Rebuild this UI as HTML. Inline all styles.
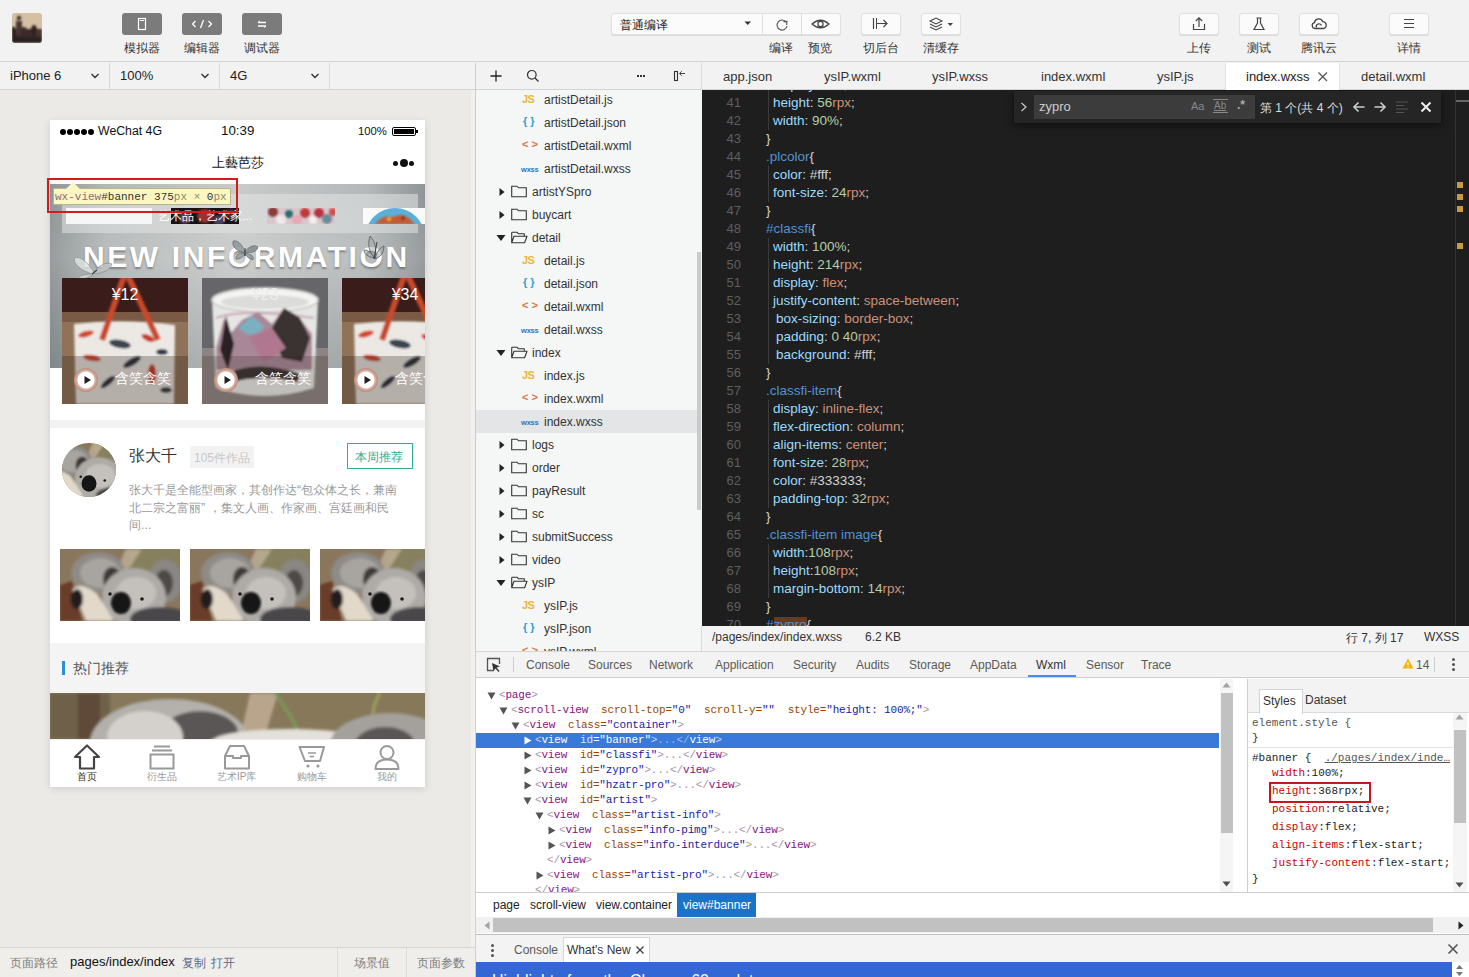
<!DOCTYPE html>
<html><head><meta charset="utf-8">
<style>
*{margin:0;padding:0;box-sizing:border-box}
html,body{width:1469px;height:977px;overflow:hidden;background:#f2f2f2;font-family:"Liberation Sans",sans-serif;color:#333}
.a{position:absolute}
.t{position:absolute;white-space:nowrap}
/* toolbar */
#top{left:0;top:0;width:1469px;height:62px;background:#f2f2f2;border-bottom:1px solid #d3d3d3}
.gbtn{position:absolute;top:13px;width:40px;height:22px;background:#7b7b7b;border-radius:3px}
.wbtn{position:absolute;top:13px;width:40px;height:22px;background:#fbfbfb;border:1px solid #e0e0e0;border-radius:3px;box-shadow:0 1px 1px rgba(0,0,0,.1)}
.lbl{position:absolute;top:40px;font-size:12px;color:#333;width:60px;text-align:center}
/* row2 */
#row2{left:0;top:63px;width:1469px;height:27px;background:#f2f2f2;border-bottom:1px solid #d3d3d3}
/* simulator */
#sim{left:0;top:90px;width:475px;height:857px;background:#ebeae7}
#simbar{left:0;top:947px;width:475px;height:30px;background:#efeeeb;border-top:1px solid #d6d6d6}
#phone{left:50px;top:120px;width:375px;height:667px;background:#fff;overflow:hidden;box-shadow:0 2px 8px rgba(0,0,0,.12)}
/* tree */
#tree{left:476px;top:90px;width:225px;height:561px;background:#f5f6f6;overflow:hidden}
.tr{position:absolute;left:0;width:225px;height:23px;font-size:12px;color:#333;line-height:23px}
/* editor */
#ed{left:702px;top:90px;width:767px;height:536px;background:#1e1e1e;overflow:hidden}
#edst{left:701px;top:626px;width:768px;height:25px;background:#f3f3f3;border-left:1px solid #dadada}
.ln{position:absolute;left:0;width:39px;text-align:right;font-size:13px;color:#5e5e5e}
.cl{position:absolute;left:65px;font-size:13.5px;color:#9cdcfe;white-space:nowrap}
/* devtools */
#dt{left:476px;top:651px;width:993px;height:326px;background:#fff}
.mono{font-family:"Liberation Mono",monospace}
</style></head><body>
<svg width="0" height="0" style="position:absolute"><defs>
<filter id="bl" x="-20%" y="-20%" width="140%" height="140%"><feGaussianBlur stdDeviation="1.6"/></filter>
<filter id="bl2" x="-20%" y="-20%" width="140%" height="140%"><feGaussianBlur stdDeviation="0.9"/></filter>
<g id="kg">
 <rect width="120" height="72" fill="#8a765c"/>
 <rect x="70" y="0" width="50" height="30" fill="#86805e"/>
 <path d="M66 0 L82 0 L60 34 L50 34 Z" fill="#c9b9a2" opacity=".7" filter="url(#bl)"/>
 <path d="M0 36 L12 32 L22 72 L0 72 Z" fill="#6a3e2c" filter="url(#bl2)"/>
 <g filter="url(#bl)">
  <ellipse cx="38" cy="24" rx="27" ry="21" fill="#8e8a86"/>
  <ellipse cx="40" cy="24" rx="20" ry="15" fill="#a8a4a0"/>
  <ellipse cx="52" cy="30" rx="9" ry="12" fill="#3e3a38"/>
  <ellipse cx="105" cy="32" rx="17" ry="22" fill="#8a8682"/>
  <ellipse cx="104" cy="34" rx="9" ry="13" fill="#4e4a48"/>
  <ellipse cx="74" cy="48" rx="32" ry="29" fill="#aeaba7"/>
  <ellipse cx="76" cy="44" rx="20" ry="16" fill="#c4c1bd"/>
  <ellipse cx="100" cy="70" rx="30" ry="12" fill="#4a474a"/>
  <path d="M12 40 Q22 32 38 46 L54 72 L26 72 Z" fill="#e2d9cb"/>
  <ellipse cx="17" cy="50" rx="6" ry="10" fill="#221c1a"/>
 </g>
 <ellipse cx="61" cy="54" rx="10" ry="11" fill="#141212" filter="url(#bl2)"/>
 <circle cx="50" cy="45" r="1.8" fill="#1e1a1a"/>
 <circle cx="82" cy="50" r="1.8" fill="#1e1a1a"/>
</g>
</defs></svg>

<!-- TOP TOOLBAR -->
<div id="top" class="a">
  <div class="a" style="left:12px;top:13px;width:30px;height:30px;border-radius:3px;overflow:hidden">
    <svg width="30" height="30"><rect width="30" height="30" fill="#d6c0a4"/><g filter="url(#bl2)">
    <rect x="0" y="16" width="30" height="14" fill="#3a2a26"/>
    <rect x="4" y="8" width="6" height="14" fill="#4a3430"/><circle cx="7" cy="5" r="2.2" fill="#3a2a24"/>
    <ellipse cx="12" cy="18" rx="3" ry="4" fill="#3a2c28"/><ellipse cx="22" cy="17" rx="3" ry="5" fill="#2e2422"/>
    <ellipse cx="27" cy="20" rx="3" ry="4" fill="#4a3430"/><rect x="0" y="24" width="30" height="6" fill="#2a2020"/>
    <rect x="0" y="14" width="3" height="16" fill="#1e1a1a"/></g></svg>
  </div>
  <div class="gbtn" style="left:122px"><svg class="a" style="left:0;top:0" width="40" height="22"><rect x="16.5" y="5.5" width="7" height="11" fill="none" stroke="#fff" stroke-width="1.2"/><line x1="18" y1="7.5" x2="22" y2="7.5" stroke="#fff" stroke-width="1"/></svg></div>
  <div class="gbtn" style="left:182px"><svg class="a" style="left:0;top:0" width="40" height="22"><path d="M13.5 8 L10.5 11 L13.5 14 M26.5 8 L29.5 11 L26.5 14 M21.5 7 L18.5 15" fill="none" stroke="#fff" stroke-width="1.3"/></svg></div>
  <div class="gbtn" style="left:242px"><svg class="a" style="left:0;top:0" width="40" height="22"><path d="M16 9.5 H24 M16 13 H24" stroke="#fff" stroke-width="1.5"/><path d="M18 8 L16 9.5 M22 14.5 L24 13" stroke="#fff" stroke-width="1"/></svg></div>
  <div class="lbl" style="left:112px">模拟器</div>
  <div class="lbl" style="left:172px">编辑器</div>
  <div class="lbl" style="left:232px">调试器</div>

  <div class="wbtn" style="left:611px;width:230px"></div>
  <div class="a" style="left:762px;top:14px;width:1px;height:20px;background:#dedede"></div>
  <div class="a" style="left:801px;top:14px;width:1px;height:20px;background:#dedede"></div>
  <div class="t" style="left:620px;top:17px;font-size:12px;color:#222">普通编译</div>
  <svg class="a" style="left:744px;top:21px" width="8" height="5"><path d="M0.5 0.5 H7 L3.75 4 Z" fill="#333"/></svg>
  <svg class="a" style="left:772px;top:15px" width="20" height="20"><path d="M14.2 7.2 A5 5 0 1 0 15 11" fill="none" stroke="#555" stroke-width="1.1"/><path d="M11.5 6.6 L15 6.4 L14.6 10" fill="none" stroke="#555" stroke-width="1.1"/></svg>
  <svg class="a" style="left:810px;top:15px" width="21" height="18"><path d="M2 9 Q10.5 1.5 19 9 Q10.5 16.5 2 9 Z" fill="none" stroke="#444" stroke-width="1.2"/><circle cx="10.5" cy="9" r="2.6" fill="none" stroke="#444" stroke-width="1.2"/></svg>
  <div class="lbl" style="left:751px">编译</div>
  <div class="lbl" style="left:790px">预览</div>
  <div class="wbtn" style="left:861px"></div>
  <svg class="a" style="left:870px;top:15px" width="22" height="18"><path d="M3.5 3 V14" stroke="#444" stroke-width="1.2"/><path d="M7 8.5 H17 M13.5 5 L17 8.5 L13.5 12" fill="none" stroke="#444" stroke-width="1.2"/><path d="M6.5 3 V14" stroke="#444" stroke-width="1"/></svg>
  <div class="lbl" style="left:851px">切后台</div>
  <div class="wbtn" style="left:921px"></div>
  <svg class="a" style="left:925px;top:14px" width="32" height="20"><path d="M5 7 L11 4 L17 7 L11 10 Z" fill="none" stroke="#444" stroke-width="1.1"/><path d="M5 10 L11 13 L17 10 M5 13 L11 16 L17 13" fill="none" stroke="#444" stroke-width="1.1"/><path d="M22.5 9 H28 L25.25 12 Z" fill="#444"/></svg>
  <div class="lbl" style="left:911px">清缓存</div>

  <div class="wbtn" style="left:1179px"></div>
  <svg class="a" style="left:1189px;top:14px" width="20" height="20"><path d="M4.5 10 V15.5 H15.5 V10" fill="none" stroke="#444" stroke-width="1.2"/><path d="M10 13 V4 M6.8 7 L10 3.8 L13.2 7" fill="none" stroke="#444" stroke-width="1.2"/></svg>
  <div class="lbl" style="left:1169px">上传</div>
  <div class="wbtn" style="left:1239px"></div>
  <svg class="a" style="left:1249px;top:14px" width="20" height="20"><path d="M7.5 4 H12.5 M8.5 4 V9 L5 15.5 H15 L11.5 9 V4" fill="none" stroke="#444" stroke-width="1.2"/></svg>
  <div class="lbl" style="left:1229px">测试</div>
  <div class="wbtn" style="left:1299px"></div>
  <svg class="a" style="left:1309px;top:14px" width="20" height="20"><path d="M6 14.5 A3 3 0 0 1 5.5 8.6 A4.2 4.2 0 0 1 13.6 7.6 A3.5 3.5 0 0 1 14.5 14.5 Z" fill="none" stroke="#444" stroke-width="1.3"/><path d="M7.5 13.5 A2.6 2.6 0 0 1 12.5 11.5" fill="none" stroke="#444" stroke-width="1.3"/></svg>
  <div class="lbl" style="left:1289px">腾讯云</div>
  <div class="wbtn" style="left:1389px"></div>
  <svg class="a" style="left:1399px;top:14px" width="20" height="20"><path d="M5 5.5 H15 M5 9.5 H15 M5 13.5 H15" stroke="#444" stroke-width="1.2"/></svg>
  <div class="lbl" style="left:1379px">详情</div>
</div>

<!-- ROW 2 -->
<div id="row2" class="a">
  <div class="t" style="left:10px;top:5px;font-size:13px;color:#222">iPhone 6</div>
  <svg class="a" style="left:90px;top:9px" width="10" height="8"><path d="M1.5 2 L5 5.5 L8.5 2" fill="none" stroke="#333" stroke-width="1.4"/></svg>
  <div class="a" style="left:109px;top:0;width:1px;height:26px;background:#d8d8d8"></div>
  <div class="t" style="left:120px;top:5px;font-size:13px;color:#222">100%</div>
  <svg class="a" style="left:200px;top:9px" width="10" height="8"><path d="M1.5 2 L5 5.5 L8.5 2" fill="none" stroke="#333" stroke-width="1.4"/></svg>
  <div class="a" style="left:219px;top:0;width:1px;height:26px;background:#d8d8d8"></div>
  <div class="t" style="left:230px;top:5px;font-size:13px;color:#222">4G</div>
  <svg class="a" style="left:310px;top:9px" width="10" height="8"><path d="M1.5 2 L5 5.5 L8.5 2" fill="none" stroke="#333" stroke-width="1.4"/></svg>
  <div class="a" style="left:329px;top:0;width:1px;height:26px;background:#d8d8d8"></div>
  <div class="a" style="left:475px;top:0;width:1px;height:27px;background:#cfcfcf"></div>
  <svg class="a" style="left:489px;top:6px" width="14" height="14"><path d="M7 1.5 V12.5 M1.5 7 H12.5" stroke="#222" stroke-width="1.3"/></svg>
  <svg class="a" style="left:526px;top:6px" width="14" height="14"><circle cx="5.8" cy="5.8" r="4.3" fill="none" stroke="#333" stroke-width="1.2"/><path d="M9 9 L12.5 12.5" stroke="#333" stroke-width="1.3"/></svg>
  <div class="a" style="left:637px;top:12px;width:2px;height:2px;background:#333;box-shadow:3px 0 #333,6px 0 #333"></div>
  <svg class="a" style="left:671px;top:5px" width="16" height="14"><rect x="3.5" y="3.5" width="3" height="9" fill="none" stroke="#333" stroke-width="1.1"/><path d="M8.5 5.5 H14 M8.5 5.5 L10.8 3.2 M8.5 5.5 L10.8 7.8" fill="none" stroke="#333" stroke-width="0.9"/></svg>
  <div class="a" style="left:701px;top:0;width:1px;height:27px;background:#dadada"></div>
  <div class="a" style="left:1225px;top:0;width:115px;height:27px;background:#fff;border-left:1px solid #e2e2e2;border-right:1px solid #e2e2e2"></div>
  <div class="t" style="left:723px;top:6px;font-size:13px;color:#333">app.json</div><div class="t" style="left:824px;top:6px;font-size:13px;color:#333">ysIP.wxml</div><div class="t" style="left:932px;top:6px;font-size:13px;color:#333">ysIP.wxss</div><div class="t" style="left:1041px;top:6px;font-size:13px;color:#333">index.wxml</div><div class="t" style="left:1157px;top:6px;font-size:13px;color:#333">ysIP.js</div><div class="t" style="left:1361px;top:6px;font-size:13px;color:#333">detail.wxml</div>
  <div class="t" style="left:1246px;top:6px;font-size:13px;color:#222">index.wxss</div>
  <svg class="a" style="left:1317px;top:8px" width="12" height="12"><path d="M1.5 1.5 L10 10 M10 1.5 L1.5 10" stroke="#555" stroke-width="1.2"/></svg>
</div>

<!-- SIMULATOR -->
<div id="sim" class="a"></div>
<div id="phone" class="a">
  <!-- status bar -->
  <div class="a" style="left:10px;top:9px;width:6px;height:6px;border-radius:50%;background:#000;box-shadow:7px 0 #000,14px 0 #000,21px 0 #000,28px 0 #000"></div>
  <div class="t" style="left:48px;top:4px;font-size:12.3px;color:#111">WeChat 4G</div>
  <div class="t" style="left:171px;top:3px;font-size:13.3px;color:#111">10:39</div>
  <div class="t" style="left:308px;top:5px;font-size:11.3px;color:#111">100%</div>
  <div class="a" style="left:342px;top:7px;width:24px;height:9px;border:1px solid #000;border-radius:2px;padding:1px"><div style="width:100%;height:100%;background:#000"></div></div>
  <div class="a" style="left:366px;top:10px;width:2px;height:3px;background:#000"></div>
  <!-- nav -->
  <div class="t" style="left:0;width:375px;text-align:center;top:34px;font-size:13px;color:#111">上藝芭莎</div>
  <div class="a" style="left:343px;top:41px;width:5px;height:5px;border-radius:50%;background:#111"></div>
  <div class="a" style="left:350px;top:39px;width:8px;height:8px;border-radius:50%;background:#111"></div>
  <div class="a" style="left:359px;top:41px;width:5px;height:5px;border-radius:50%;background:#111"></div>
  <!-- banner -->
  <div class="a" style="left:0;top:64px;width:375px;height:184px;background:linear-gradient(90deg,#8f9597 0%,#b4b8b8 15%,#c9cbca 50%,#b4b8b8 85%,#8f9597 100%)">
    <div class="a" style="left:0;top:0;width:375px;height:184px;background:linear-gradient(180deg,rgba(255,255,255,0) 0%,rgba(255,255,255,.08) 40%,rgba(60,70,75,.18) 100%)"></div>
    <div class="a" style="left:12px;top:10px;width:356px;height:39px;background:rgba(225,228,227,.55)"></div>
    <div class="a" style="left:16px;top:24px;width:86px;height:16px;background:#f6f6f6"></div>
    <svg class="a" style="left:121px;top:24px" width="68" height="16"><rect width="68" height="16" fill="#161214"/><g filter="url(#bl2)"><ellipse cx="14" cy="10" rx="6" ry="6" fill="#6a3a44"/><ellipse cx="34" cy="8" rx="8" ry="7" fill="#9a3030"/><ellipse cx="48" cy="12" rx="6" ry="5" fill="#4a4060"/><ellipse cx="60" cy="6" rx="5" ry="5" fill="#5a2a2a"/></g></svg>
    <div class="t" style="left:108px;top:24px;font-size:12px;color:#fff">艺术品，艺术家...</div>
    <svg class="a" style="left:217px;top:24px" width="68" height="16"><rect width="68" height="16" fill="#d8c8cc"/><g filter="url(#bl2)"><circle cx="6" cy="4" r="5" fill="#8a3a3a"/><circle cx="14" cy="12" r="5" fill="#f0e8ec"/><circle cx="22" cy="6" r="4" fill="#2a6a70"/><circle cx="30" cy="12" r="5" fill="#e8a8b8"/><circle cx="38" cy="5" r="5" fill="#c03838"/><circle cx="46" cy="12" r="4" fill="#f4f0f0"/><circle cx="52" cy="5" r="5" fill="#b83040"/><circle cx="60" cy="11" r="5" fill="#6a8a98"/><circle cx="66" cy="4" r="4" fill="#d05050"/></g></svg>
    <svg class="a" style="left:313px;top:24px" width="62" height="16"><rect width="62" height="16" fill="#fafafa"/><circle cx="32" cy="30" r="30" fill="#5ab0dc"/><g filter="url(#bl2)"><path d="M12 16 Q20 6 30 9 Q40 4 48 12 L52 16 Z" fill="#c85a30"/><circle cx="26" cy="11" r="2" fill="#e8b040"/><circle cx="40" cy="10" r="2" fill="#6a3a20"/></g></svg>
    <div class="t" style="left:33px;top:56px;font-size:30px;font-weight:bold;letter-spacing:2.6px;color:#fff;text-shadow:0 2px 2px rgba(60,60,60,.45)">NEW INFORMATION</div>
    <svg class="a" style="left:22px;top:68px" width="42" height="28" viewBox="0 0 42 28"><g stroke="#7a8284" stroke-width=".6"><path d="M22 20 Q10 2 2 6 Q2 16 20 22 Z" fill="rgba(225,228,228,.8)"/><path d="M20 22 Q6 22 6 27 Q14 28 21 23 Z" fill="rgba(205,210,210,.8)"/><path d="M22 20 Q32 8 40 12 Q38 20 23 22 Z" fill="rgba(190,196,196,.8)"/></g><path d="M20 22 L25 18" stroke="#444" stroke-width="1.2"/></svg>
    <svg class="a" style="left:181px;top:55px" width="28" height="22" viewBox="0 0 28 22"><g stroke="#5a6264" stroke-width=".6"><path d="M14 12 Q8 0 2 2 Q0 10 13 14 Z" fill="rgba(140,148,150,.85)"/><path d="M13 14 Q4 14 5 20 Q10 21 14 15 Z" fill="rgba(150,158,160,.85)"/><path d="M14 12 Q22 4 27 8 Q26 14 15 14 Z" fill="rgba(130,138,140,.85)"/><path d="M15 14 Q24 16 22 21 Q17 20 14 15 Z" fill="rgba(140,148,150,.85)"/></g><path d="M14 9 L14 17" stroke="#333" stroke-width="1.1"/></svg>
    <svg class="a" style="left:312px;top:50px" width="24" height="28" viewBox="0 0 24 28"><g stroke="#4a5254" stroke-width=".7" fill="rgba(160,168,170,.5)"><path d="M12 24 Q4 14 8 2 Q16 10 13 24 Z"/><path d="M13 24 Q16 14 22 12 Q22 22 13 25 Z"/><path d="M12 24 Q2 22 2 16 Q8 16 12 23 Z"/></g><path d="M12 25 L15 8" stroke="#333" stroke-width=".9"/></svg>
  </div>
  <!-- cards -->
  <svg class="a" style="left:0;top:0;width:0;height:0"><defs><g id="bag">
  <rect width="126" height="126" fill="#8f7258"/>
  <rect width="126" height="34" fill="#3a1c1a"/>
  <rect x="0" y="34" width="126" height="10" fill="#7a5a44"/>
  <g filter="url(#bl2)">
   <path d="M12 46 Q60 40 113 47 L112 126 L14 126 Z" fill="#ece8e4"/>
   <path d="M62 -2 L40 62" stroke="#c84a2c" stroke-width="6" fill="none"/>
   <path d="M66 -2 L96 62" stroke="#c84a2c" stroke-width="6" fill="none"/>
   <ellipse cx="24" cy="56" rx="8" ry="3" fill="#d44a2a" transform="rotate(-15 24 56)"/>
   <ellipse cx="58" cy="66" rx="11" ry="4" fill="#3a4450" transform="rotate(10 58 66)"/>
   <ellipse cx="86" cy="60" rx="7" ry="3" fill="#c83a28" transform="rotate(25 86 60)"/>
   <ellipse cx="100" cy="74" rx="6" ry="3" fill="#2a3a4a"/>
   <ellipse cx="30" cy="80" rx="9" ry="3" fill="#d24a2a" transform="rotate(10 30 80)"/>
   <ellipse cx="70" cy="84" rx="10" ry="3.5" fill="#2a3440" transform="rotate(-30 70 84)"/>
   <ellipse cx="90" cy="96" rx="4" ry="10" fill="#c93a26"/>
   <ellipse cx="46" cy="104" rx="9" ry="3" fill="#2a3040" transform="rotate(-40 46 104)"/>
   <ellipse cx="22" cy="108" rx="6" ry="3" fill="#c84a2c"/>
   <ellipse cx="104" cy="112" rx="6" ry="3" fill="#3a3a44"/>
  </g>
  <rect x="0" y="78" width="126" height="48" fill="rgba(40,30,20,.28)"/>
</g>
<g id="cup">
  <rect width="126" height="126" fill="#66666a"/>
  <rect x="0" y="70" width="126" height="56" fill="#8c8482"/>
  <g filter="url(#bl2)">
   <path d="M10 22 L116 22 L112 110 Q63 126 14 110 Z" fill="#e6e6e4"/>
   <ellipse cx="63" cy="22" rx="53" ry="12" fill="#f4f4f2" stroke="#cfcfcd" stroke-width="2"/>
   <ellipse cx="63" cy="24" rx="44" ry="7" fill="#dcdcda"/>
   <path d="M14 40 Q40 30 112 40" stroke="#c8a8b8" stroke-width="2" fill="none"/>
   <path d="M14 70 L22 40 L28 56 L40 42 L56 34 L70 46 L82 30 L96 38 L110 56 L110 92 L14 92 Z" fill="#a88898"/>
   <path d="M18 72 L24 38 L32 66 L26 92 Z" fill="#2a2222"/>
   <path d="M70 50 L82 30 L98 40 L108 60 L100 84 L80 80 Z" fill="#3a3030"/>
   <path d="M36 50 L50 38 L62 48 L54 62 Z" fill="#7ab0c0"/>
   <path d="M46 58 L70 50 L84 70 L62 84 Z" fill="#b07890"/>
   <path d="M28 94 Q60 82 98 96 L96 104 Q60 96 30 104 Z" fill="#3a3234"/>
  </g>
  <rect x="0" y="78" width="126" height="48" fill="rgba(40,30,20,.2)"/>
</g></defs></svg>
  <svg class="a" style="left:12px;top:158px" width="126" height="126"><use href="#bag"/></svg>
  <svg class="a" style="left:152px;top:158px" width="126" height="126"><use href="#cup"/></svg>
  <svg class="a" style="left:292px;top:158px" width="83" height="126" viewBox="0 0 83 126"><use href="#bag"/></svg>
  <div class="t" style="left:12px;width:126px;text-align:center;top:166px;font-size:16px;color:#fff">¥12</div>
  <div class="t" style="left:152px;width:126px;text-align:center;top:166px;font-size:16px;color:#eee">¥23</div>
  <div class="t" style="left:292px;width:126px;text-align:center;top:166px;font-size:16px;color:#fff">¥34</div>
  <div class="a" style="left:24px;top:248px;width:24px;height:24px;border-radius:50%;background:radial-gradient(circle,#fff 0,#fff 8px,#d9b2a4 9px,#b98a7a 12px)"></div>
<svg class="a" style="left:32px;top:255px" width="10" height="10"><path d="M2.5 1 L9 5 L2.5 9 Z" fill="#222"/></svg>
<div class="t" style="left:65px;top:250px;font-size:14px;color:#fff">含笑含笑</div><div class="a" style="left:164px;top:248px;width:24px;height:24px;border-radius:50%;background:radial-gradient(circle,#fff 0,#fff 8px,#d9b2a4 9px,#b98a7a 12px)"></div>
<svg class="a" style="left:172px;top:255px" width="10" height="10"><path d="M2.5 1 L9 5 L2.5 9 Z" fill="#222"/></svg>
<div class="t" style="left:205px;top:250px;font-size:14px;color:#fff">含笑含笑</div><div class="a" style="left:304px;top:248px;width:24px;height:24px;border-radius:50%;background:radial-gradient(circle,#fff 0,#fff 8px,#d9b2a4 9px,#b98a7a 12px)"></div>
<svg class="a" style="left:312px;top:255px" width="10" height="10"><path d="M2.5 1 L9 5 L2.5 9 Z" fill="#222"/></svg>
<div class="t" style="left:345px;top:250px;font-size:14px;color:#fff">含笑含笑</div>
  <!-- band -->
  <div class="a" style="left:0;top:300px;width:375px;height:8px;background:#f2f2f2"></div>
  <!-- artist -->
  <div class="a" style="left:12px;top:323px;width:54px;height:54px;border-radius:50%;overflow:hidden"><svg class="a" style="left:0;top:0" width="54" height="54" viewBox="25 0 72 72" preserveAspectRatio="xMidYMid slice"><use href="#kg"/></svg></div>
  <div class="t" style="left:79px;top:326px;font-size:16px;color:#333">张大千</div>
  <div class="a" style="left:140px;top:326px;width:64px;height:22px;background:#f2f2f2"></div>
  <div class="t" style="left:144px;top:330px;font-size:12px;color:#c8c8c8">105件作品</div>
  <div class="a" style="left:297px;top:323px;width:66px;height:26px;border:1px solid #2fae9a"></div>
  <div class="t" style="left:305px;top:329px;font-size:12px;color:#2fae9a">本周推荐</div>
  <div class="t" style="left:79px;top:362px;font-size:12.4px;line-height:17.5px;color:#999">张大千是全能型画家，其创作达“包众体之长，兼南<br>北二宗之富丽” ，集文人画、作家画、宫廷画和民<br>间...</div>
  <svg class="a" style="left:10px;top:429px" width="120" height="72" viewBox="0 0 120 72"><use href="#kg"/></svg>
  <svg class="a" style="left:140px;top:429px" width="120" height="72" viewBox="0 0 120 72"><use href="#kg"/></svg>
  <svg class="a" style="left:270px;top:429px" width="120" height="72" viewBox="0 0 120 72"><use href="#kg"/></svg>
  <!-- hot -->
  <div class="a" style="left:0;top:523px;width:375px;height:50px;background:#f4f4f4"></div>
  <div class="a" style="left:12px;top:541px;width:3px;height:14px;background:#2d8fd8"></div>
  <div class="t" style="left:23px;top:540px;font-size:14px;color:#555">热门推荐</div>
  <svg class="a" style="left:0;top:573px" width="375" height="46" viewBox="0 0 375 46">
    <rect width="375" height="46" fill="#867859"/>
    <g filter="url(#bl)">
      <rect x="0" y="0" width="60" height="46" fill="#6e604a"/>
      <rect x="28" y="0" width="22" height="46" fill="#5e4838"/>
      <path d="M200 0 L228 0 L214 46 L190 46 Z" fill="#c4b098" opacity=".8"/>
      <path d="M225 0 Q240 20 252 46" stroke="#7a9a58" stroke-width="3" fill="none"/>
      <path d="M330 0 Q318 20 326 40" stroke="#a0a060" stroke-width="3" fill="none"/>
      <ellipse cx="120" cy="50" rx="80" ry="44" fill="#b4b0ac"/>
      <ellipse cx="150" cy="40" rx="38" ry="22" fill="#5a5654"/>
      <ellipse cx="95" cy="44" rx="38" ry="26" fill="#d4d0cc"/>
      <ellipse cx="240" cy="50" rx="80" ry="14" fill="#e4e0da"/>
      <ellipse cx="340" cy="52" rx="60" ry="32" fill="#a4a09c"/>
      <ellipse cx="335" cy="52" rx="30" ry="18" fill="#5a5654"/>
    </g>
  </svg>
  <!-- tabbar -->
  <div class="a" style="left:0;top:619px;width:375px;height:48px;background:#fff;border-top:1px solid #eee"></div>
  <svg class="a" style="left:22px;top:623px" width="30" height="30"><path d="M15 2.5 L3 14 H8 V25.5 H22 V14 H27 Z" fill="none" stroke="#444" stroke-width="2.2" stroke-linejoin="round"/></svg>
  <svg class="a" style="left:97px;top:623px" width="30" height="30"><path d="M7 3.5 H23 M5 7.5 H25" stroke="#999" stroke-width="2"/><rect x="3.5" y="11.5" width="23" height="14" fill="none" stroke="#999" stroke-width="2"/></svg>
  <svg class="a" style="left:172px;top:623px" width="30" height="30"><path d="M8 3 H22 L27 13 V25.5 H3 V13 Z M3 13 H11 V15 H19 V13 H27" fill="none" stroke="#999" stroke-width="2" stroke-linejoin="round"/></svg>
  <svg class="a" style="left:247px;top:623px" width="30" height="30"><path d="M2.5 4 H27 L23 18 H8 Z" fill="none" stroke="#999" stroke-width="2" stroke-linejoin="round"/><path d="M11 10 H19 M12.5 13.5 H17" stroke="#999" stroke-width="1.6"/><circle cx="11" cy="23" r="1.6" fill="#999"/><circle cx="21" cy="23" r="1.6" fill="#999"/></svg>
  <svg class="a" style="left:322px;top:623px" width="30" height="30"><circle cx="15" cy="9.5" r="6.5" fill="none" stroke="#999" stroke-width="2"/><path d="M3.5 26 Q3.5 16.5 15 16.5 Q26.5 16.5 26.5 26 Z" fill="none" stroke="#999" stroke-width="2" stroke-linejoin="round"/></svg>
  <div class="t" style="left:27px;top:650px;font-size:10px;color:#333">首页</div>
  <div class="t" style="left:97px;top:650px;font-size:10px;color:#999">衍生品</div>
  <div class="t" style="left:167px;top:650px;font-size:10px;color:#999">艺术IP库</div>
  <div class="t" style="left:247px;top:650px;font-size:10px;color:#999">购物车</div>
  <div class="t" style="left:327px;top:650px;font-size:10px;color:#999">我的</div>
</div>
<!-- tooltip -->
<div class="a" style="left:47px;top:178px;width:191px;height:35px;border:2px solid #d41a1a"></div>
<div class="a" style="left:53px;top:188px;width:178px;height:17px;background:#fcf6c0;border:1px solid #b8b48a"></div>
<svg class="a" style="left:66px;top:182px" width="14" height="7"><path d="M0 7 L7 0 L14 7 Z" fill="#fcf6c0"/></svg>
<div class="t mono" style="left:55px;top:191px;font-size:11px;color:#333"><span style="color:#8e6a7e">wx-view</span>#banner 375<span style="color:#8a8a6a">px</span> <span style="color:#8a8a6a">×</span> 0<span style="color:#8a8a6a">px</span></div>
<div id="simbar" class="a">
  <div class="t" style="left:10px;top:7px;font-size:12px;color:#808080">页面路径</div>
  <div class="t" style="left:70px;top:6px;font-size:13px;color:#111">pages/index/index</div>
  <div class="t" style="left:182px;top:7px;font-size:12px;color:#5a6a90">复制</div>
  <div class="t" style="left:211px;top:7px;font-size:12px;color:#5a6a90">打开</div>
  <div class="a" style="left:337px;top:0;width:1px;height:30px;background:#dcdbd8"></div>
  <div class="t" style="left:354px;top:7px;font-size:12px;color:#808080">场景值</div>
  <div class="a" style="left:406px;top:0;width:1px;height:30px;background:#dcdbd8"></div>
  <div class="t" style="left:417px;top:7px;font-size:12px;color:#808080">页面参数</div>
</div>

<div class="a" style="left:471px;top:90px;width:4px;height:857px;background:#f1f0ed"></div>
<div class="a" style="left:475px;top:63px;width:1px;height:914px;background:#cbcbcb"></div>
<!-- FILE TREE -->
<div id="tree" class="a">
<div class="t" style="left:46px;top:3px;font-size:11px;color:#e9b441;font-weight:bold;letter-spacing:-0.5px">JS</div>
<div class="t" style="left:68px;top:3px;font-size:12px;color:#333">artistDetail.js</div>
<div class="t" style="left:47px;top:25px;font-size:11px;color:#31a0cc;font-weight:bold">{ }</div>
<div class="t" style="left:68px;top:26px;font-size:12px;color:#333">artistDetail.json</div>
<div class="t" style="left:46px;top:48px;font-size:11px;color:#e07248;font-weight:bold">&lt; &gt;</div>
<div class="t" style="left:68px;top:49px;font-size:12px;color:#333">artistDetail.wxml</div>
<div class="t" style="left:45px;top:75px;font-size:7.5px;color:#2f74c6;font-weight:bold;letter-spacing:-0.2px">wxss</div>
<div class="t" style="left:68px;top:72px;font-size:12px;color:#333">artistDetail.wxss</div>
<svg class="a" style="left:22px;top:97px" width="8" height="10"><path d="M1.5 1 L6.5 5 L1.5 9 Z" fill="#222"/></svg>
<svg class="a" style="left:35px;top:94px" width="16" height="14"><path d="M0.7 2.2 H6 L7.5 3.8 H15.3 V12.8 H0.7 Z" fill="none" stroke="#333" stroke-width="1.1"/></svg>
<div class="t" style="left:56px;top:95px;font-size:12px;color:#333">artistYSpro</div>
<svg class="a" style="left:22px;top:120px" width="8" height="10"><path d="M1.5 1 L6.5 5 L1.5 9 Z" fill="#222"/></svg>
<svg class="a" style="left:35px;top:117px" width="16" height="14"><path d="M0.7 2.2 H6 L7.5 3.8 H15.3 V12.8 H0.7 Z" fill="none" stroke="#333" stroke-width="1.1"/></svg>
<div class="t" style="left:56px;top:118px;font-size:12px;color:#333">buycart</div>
<svg class="a" style="left:20px;top:144px" width="10" height="8"><path d="M0.5 1 L9.5 1 L5 7 Z" fill="#222"/></svg>
<svg class="a" style="left:35px;top:140px" width="17" height="14"><path d="M0.7 2.2 H6 L7.5 3.8 H13.3 V6 M0.7 2.2 V12.8 L3 6.2 H16 L13.6 12.8 H0.7" fill="none" stroke="#333" stroke-width="1.1" stroke-linejoin="round"/></svg>
<div class="t" style="left:56px;top:141px;font-size:12px;color:#333">detail</div>
<div class="t" style="left:46px;top:164px;font-size:11px;color:#e9b441;font-weight:bold;letter-spacing:-0.5px">JS</div>
<div class="t" style="left:68px;top:164px;font-size:12px;color:#333">detail.js</div>
<div class="t" style="left:47px;top:186px;font-size:11px;color:#31a0cc;font-weight:bold">{ }</div>
<div class="t" style="left:68px;top:187px;font-size:12px;color:#333">detail.json</div>
<div class="t" style="left:46px;top:209px;font-size:11px;color:#e07248;font-weight:bold">&lt; &gt;</div>
<div class="t" style="left:68px;top:210px;font-size:12px;color:#333">detail.wxml</div>
<div class="t" style="left:45px;top:236px;font-size:7.5px;color:#2f74c6;font-weight:bold;letter-spacing:-0.2px">wxss</div>
<div class="t" style="left:68px;top:233px;font-size:12px;color:#333">detail.wxss</div>
<svg class="a" style="left:20px;top:259px" width="10" height="8"><path d="M0.5 1 L9.5 1 L5 7 Z" fill="#222"/></svg>
<svg class="a" style="left:35px;top:255px" width="17" height="14"><path d="M0.7 2.2 H6 L7.5 3.8 H13.3 V6 M0.7 2.2 V12.8 L3 6.2 H16 L13.6 12.8 H0.7" fill="none" stroke="#333" stroke-width="1.1" stroke-linejoin="round"/></svg>
<div class="t" style="left:56px;top:256px;font-size:12px;color:#333">index</div>
<div class="t" style="left:46px;top:279px;font-size:11px;color:#e9b441;font-weight:bold;letter-spacing:-0.5px">JS</div>
<div class="t" style="left:68px;top:279px;font-size:12px;color:#333">index.js</div>
<div class="t" style="left:46px;top:301px;font-size:11px;color:#e07248;font-weight:bold">&lt; &gt;</div>
<div class="t" style="left:68px;top:302px;font-size:12px;color:#333">index.wxml</div>
<div class="a" style="left:0;top:320px;width:221px;height:23px;background:#e4e5e6"></div>
<div class="t" style="left:45px;top:328px;font-size:7.5px;color:#2f74c6;font-weight:bold;letter-spacing:-0.2px">wxss</div>
<div class="t" style="left:68px;top:325px;font-size:12px;color:#333">index.wxss</div>
<svg class="a" style="left:22px;top:350px" width="8" height="10"><path d="M1.5 1 L6.5 5 L1.5 9 Z" fill="#222"/></svg>
<svg class="a" style="left:35px;top:347px" width="16" height="14"><path d="M0.7 2.2 H6 L7.5 3.8 H15.3 V12.8 H0.7 Z" fill="none" stroke="#333" stroke-width="1.1"/></svg>
<div class="t" style="left:56px;top:348px;font-size:12px;color:#333">logs</div>
<svg class="a" style="left:22px;top:373px" width="8" height="10"><path d="M1.5 1 L6.5 5 L1.5 9 Z" fill="#222"/></svg>
<svg class="a" style="left:35px;top:370px" width="16" height="14"><path d="M0.7 2.2 H6 L7.5 3.8 H15.3 V12.8 H0.7 Z" fill="none" stroke="#333" stroke-width="1.1"/></svg>
<div class="t" style="left:56px;top:371px;font-size:12px;color:#333">order</div>
<svg class="a" style="left:22px;top:396px" width="8" height="10"><path d="M1.5 1 L6.5 5 L1.5 9 Z" fill="#222"/></svg>
<svg class="a" style="left:35px;top:393px" width="16" height="14"><path d="M0.7 2.2 H6 L7.5 3.8 H15.3 V12.8 H0.7 Z" fill="none" stroke="#333" stroke-width="1.1"/></svg>
<div class="t" style="left:56px;top:394px;font-size:12px;color:#333">payResult</div>
<svg class="a" style="left:22px;top:419px" width="8" height="10"><path d="M1.5 1 L6.5 5 L1.5 9 Z" fill="#222"/></svg>
<svg class="a" style="left:35px;top:416px" width="16" height="14"><path d="M0.7 2.2 H6 L7.5 3.8 H15.3 V12.8 H0.7 Z" fill="none" stroke="#333" stroke-width="1.1"/></svg>
<div class="t" style="left:56px;top:417px;font-size:12px;color:#333">sc</div>
<svg class="a" style="left:22px;top:442px" width="8" height="10"><path d="M1.5 1 L6.5 5 L1.5 9 Z" fill="#222"/></svg>
<svg class="a" style="left:35px;top:439px" width="16" height="14"><path d="M0.7 2.2 H6 L7.5 3.8 H15.3 V12.8 H0.7 Z" fill="none" stroke="#333" stroke-width="1.1"/></svg>
<div class="t" style="left:56px;top:440px;font-size:12px;color:#333">submitSuccess</div>
<svg class="a" style="left:22px;top:465px" width="8" height="10"><path d="M1.5 1 L6.5 5 L1.5 9 Z" fill="#222"/></svg>
<svg class="a" style="left:35px;top:462px" width="16" height="14"><path d="M0.7 2.2 H6 L7.5 3.8 H15.3 V12.8 H0.7 Z" fill="none" stroke="#333" stroke-width="1.1"/></svg>
<div class="t" style="left:56px;top:463px;font-size:12px;color:#333">video</div>
<svg class="a" style="left:20px;top:489px" width="10" height="8"><path d="M0.5 1 L9.5 1 L5 7 Z" fill="#222"/></svg>
<svg class="a" style="left:35px;top:485px" width="17" height="14"><path d="M0.7 2.2 H6 L7.5 3.8 H13.3 V6 M0.7 2.2 V12.8 L3 6.2 H16 L13.6 12.8 H0.7" fill="none" stroke="#333" stroke-width="1.1" stroke-linejoin="round"/></svg>
<div class="t" style="left:56px;top:486px;font-size:12px;color:#333">ysIP</div>
<div class="t" style="left:46px;top:509px;font-size:11px;color:#e9b441;font-weight:bold;letter-spacing:-0.5px">JS</div>
<div class="t" style="left:68px;top:509px;font-size:12px;color:#333">ysIP.js</div>
<div class="t" style="left:47px;top:531px;font-size:11px;color:#31a0cc;font-weight:bold">{ }</div>
<div class="t" style="left:68px;top:532px;font-size:12px;color:#333">ysIP.json</div>
<div class="t" style="left:46px;top:554px;font-size:11px;color:#e07248;font-weight:bold">&lt; &gt;</div>
<div class="t" style="left:68px;top:555px;font-size:12px;color:#333">ysIP.wxml</div>
<div class="a" style="left:221px;top:162px;width:4px;height:258px;background:#cacaca"></div>
</div>

<!-- EDITOR -->
<div id="ed" class="a">
<div class="a" style="left:66px;top:0;width:1px;height:40px;background:#3c3c3c"></div><div class="a" style="left:66px;top:76px;width:1px;height:36px;background:#3c3c3c"></div><div class="a" style="left:66px;top:148px;width:1px;height:126px;background:#3c3c3c"></div><div class="a" style="left:66px;top:310px;width:1px;height:108px;background:#3c3c3c"></div><div class="a" style="left:66px;top:454px;width:1px;height:54px;background:#3c3c3c"></div><div class="ln" style="top:-14px;height:18px;line-height:18px">40</div>
<div class="cl" style="left:71px;top:-14px;height:18px;line-height:18px"><span style="color:#9cdcfe">display</span><span style="color:#d4d4d4">: </span><span style="color:#ce9178">flex</span><span style="color:#d4d4d4">;</span></div>
<div class="ln" style="top:4px;height:18px;line-height:18px">41</div>
<div class="cl" style="left:71px;top:4px;height:18px;line-height:18px"><span style="color:#9cdcfe">height</span><span style="color:#d4d4d4">: </span><span style="color:#b5cea8">56</span><span style="color:#ce9178">rpx</span><span style="color:#d4d4d4">;</span></div>
<div class="ln" style="top:22px;height:18px;line-height:18px">42</div>
<div class="cl" style="left:71px;top:22px;height:18px;line-height:18px"><span style="color:#9cdcfe">width</span><span style="color:#d4d4d4">: </span><span style="color:#b5cea8">90%</span><span style="color:#d4d4d4">;</span></div>
<div class="ln" style="top:40px;height:18px;line-height:18px">43</div>
<div class="cl" style="left:64px;top:40px;height:18px;line-height:18px"><span style="color:#d4d4d4">}</span></div>
<div class="ln" style="top:58px;height:18px;line-height:18px">44</div>
<div class="cl" style="left:64px;top:58px;height:18px;line-height:18px"><span style="color:#4f94d4">.plcolor</span><span style="color:#d4d4d4">{</span></div>
<div class="ln" style="top:76px;height:18px;line-height:18px">45</div>
<div class="cl" style="left:71px;top:76px;height:18px;line-height:18px"><span style="color:#9cdcfe">color</span><span style="color:#d4d4d4">: </span><span style="color:#d4d4d4">#fff</span><span style="color:#d4d4d4">;</span></div>
<div class="ln" style="top:94px;height:18px;line-height:18px">46</div>
<div class="cl" style="left:71px;top:94px;height:18px;line-height:18px"><span style="color:#9cdcfe">font-size</span><span style="color:#d4d4d4">: </span><span style="color:#b5cea8">24</span><span style="color:#ce9178">rpx</span><span style="color:#d4d4d4">;</span></div>
<div class="ln" style="top:112px;height:18px;line-height:18px">47</div>
<div class="cl" style="left:64px;top:112px;height:18px;line-height:18px"><span style="color:#d4d4d4">}</span></div>
<div class="ln" style="top:130px;height:18px;line-height:18px">48</div>
<div class="cl" style="left:64px;top:130px;height:18px;line-height:18px"><span style="color:#4f94d4">#classfi</span><span style="color:#d4d4d4">{</span></div>
<div class="ln" style="top:148px;height:18px;line-height:18px">49</div>
<div class="cl" style="left:71px;top:148px;height:18px;line-height:18px"><span style="color:#9cdcfe">width</span><span style="color:#d4d4d4">: </span><span style="color:#b5cea8">100%</span><span style="color:#d4d4d4">;</span></div>
<div class="ln" style="top:166px;height:18px;line-height:18px">50</div>
<div class="cl" style="left:71px;top:166px;height:18px;line-height:18px"><span style="color:#9cdcfe">height</span><span style="color:#d4d4d4">: </span><span style="color:#b5cea8">214</span><span style="color:#ce9178">rpx</span><span style="color:#d4d4d4">;</span></div>
<div class="ln" style="top:184px;height:18px;line-height:18px">51</div>
<div class="cl" style="left:71px;top:184px;height:18px;line-height:18px"><span style="color:#9cdcfe">display</span><span style="color:#d4d4d4">: </span><span style="color:#ce9178">flex</span><span style="color:#d4d4d4">;</span></div>
<div class="ln" style="top:202px;height:18px;line-height:18px">52</div>
<div class="cl" style="left:71px;top:202px;height:18px;line-height:18px"><span style="color:#9cdcfe">justify-content</span><span style="color:#d4d4d4">: </span><span style="color:#ce9178">space-between</span><span style="color:#d4d4d4">;</span></div>
<div class="ln" style="top:220px;height:18px;line-height:18px">53</div>
<div class="cl" style="left:74px;top:220px;height:18px;line-height:18px"><span style="color:#9cdcfe">box-sizing</span><span style="color:#d4d4d4">: </span><span style="color:#ce9178">border-box</span><span style="color:#d4d4d4">;</span></div>
<div class="ln" style="top:238px;height:18px;line-height:18px">54</div>
<div class="cl" style="left:74px;top:238px;height:18px;line-height:18px"><span style="color:#9cdcfe">padding</span><span style="color:#d4d4d4">: </span><span style="color:#b5cea8">0 40</span><span style="color:#ce9178">rpx</span><span style="color:#d4d4d4">;</span></div>
<div class="ln" style="top:256px;height:18px;line-height:18px">55</div>
<div class="cl" style="left:74px;top:256px;height:18px;line-height:18px"><span style="color:#9cdcfe">background</span><span style="color:#d4d4d4">: </span><span style="color:#d4d4d4">#fff</span><span style="color:#d4d4d4">;</span></div>
<div class="ln" style="top:274px;height:18px;line-height:18px">56</div>
<div class="cl" style="left:64px;top:274px;height:18px;line-height:18px"><span style="color:#d4d4d4">}</span></div>
<div class="ln" style="top:292px;height:18px;line-height:18px">57</div>
<div class="cl" style="left:64px;top:292px;height:18px;line-height:18px"><span style="color:#4f94d4">.classfi-item</span><span style="color:#d4d4d4">{</span></div>
<div class="ln" style="top:310px;height:18px;line-height:18px">58</div>
<div class="cl" style="left:71px;top:310px;height:18px;line-height:18px"><span style="color:#9cdcfe">display</span><span style="color:#d4d4d4">: </span><span style="color:#ce9178">inline-flex</span><span style="color:#d4d4d4">;</span></div>
<div class="ln" style="top:328px;height:18px;line-height:18px">59</div>
<div class="cl" style="left:71px;top:328px;height:18px;line-height:18px"><span style="color:#9cdcfe">flex-direction</span><span style="color:#d4d4d4">: </span><span style="color:#ce9178">column</span><span style="color:#d4d4d4">;</span></div>
<div class="ln" style="top:346px;height:18px;line-height:18px">60</div>
<div class="cl" style="left:71px;top:346px;height:18px;line-height:18px"><span style="color:#9cdcfe">align-items</span><span style="color:#d4d4d4">: </span><span style="color:#ce9178">center</span><span style="color:#d4d4d4">;</span></div>
<div class="ln" style="top:364px;height:18px;line-height:18px">61</div>
<div class="cl" style="left:71px;top:364px;height:18px;line-height:18px"><span style="color:#9cdcfe">font-size</span><span style="color:#d4d4d4">: </span><span style="color:#b5cea8">28</span><span style="color:#ce9178">rpx</span><span style="color:#d4d4d4">;</span></div>
<div class="ln" style="top:382px;height:18px;line-height:18px">62</div>
<div class="cl" style="left:71px;top:382px;height:18px;line-height:18px"><span style="color:#9cdcfe">color</span><span style="color:#d4d4d4">: </span><span style="color:#d4d4d4">#333333</span><span style="color:#d4d4d4">;</span></div>
<div class="ln" style="top:400px;height:18px;line-height:18px">63</div>
<div class="cl" style="left:71px;top:400px;height:18px;line-height:18px"><span style="color:#9cdcfe">padding-top</span><span style="color:#d4d4d4">: </span><span style="color:#b5cea8">32</span><span style="color:#ce9178">rpx</span><span style="color:#d4d4d4">;</span></div>
<div class="ln" style="top:418px;height:18px;line-height:18px">64</div>
<div class="cl" style="left:64px;top:418px;height:18px;line-height:18px"><span style="color:#d4d4d4">}</span></div>
<div class="ln" style="top:436px;height:18px;line-height:18px">65</div>
<div class="cl" style="left:64px;top:436px;height:18px;line-height:18px"><span style="color:#4f94d4">.classfi-item image</span><span style="color:#d4d4d4">{</span></div>
<div class="ln" style="top:454px;height:18px;line-height:18px">66</div>
<div class="cl" style="left:71px;top:454px;height:18px;line-height:18px"><span style="color:#9cdcfe">width</span><span style="color:#d4d4d4">:</span><span style="color:#b5cea8">108</span><span style="color:#ce9178">rpx</span><span style="color:#d4d4d4">;</span></div>
<div class="ln" style="top:472px;height:18px;line-height:18px">67</div>
<div class="cl" style="left:71px;top:472px;height:18px;line-height:18px"><span style="color:#9cdcfe">height</span><span style="color:#d4d4d4">:</span><span style="color:#b5cea8">108</span><span style="color:#ce9178">rpx</span><span style="color:#d4d4d4">;</span></div>
<div class="ln" style="top:490px;height:18px;line-height:18px">68</div>
<div class="cl" style="left:71px;top:490px;height:18px;line-height:18px"><span style="color:#9cdcfe">margin-bottom</span><span style="color:#d4d4d4">: </span><span style="color:#b5cea8">14</span><span style="color:#ce9178">rpx</span><span style="color:#d4d4d4">;</span></div>
<div class="ln" style="top:508px;height:18px;line-height:18px">69</div>
<div class="cl" style="left:64px;top:508px;height:18px;line-height:18px"><span style="color:#d4d4d4">}</span></div>
<div class="ln" style="top:526px;height:18px;line-height:18px">70</div>
<div class="cl" style="left:64px;top:526px;height:18px;line-height:18px"><span style="color:#4f94d4">#</span><span style="color:#4f94d4;background:#6b3a1c">zypro</span><span style="color:#d4d4d4">{</span></div><div class="a" style="left:312px;top:1px;width:427px;height:32px;background:#252526;box-shadow:0 2px 8px rgba(0,0,0,.6)">
  <svg class="a" style="left:6px;top:11px" width="8" height="10"><path d="M1.5 1 L6 5 L1.5 9" fill="none" stroke="#ccc" stroke-width="1.2"/></svg>
  <div class="a" style="left:20px;top:4px;width:221px;height:24px;background:#3c3c3c"></div>
  <div class="t" style="left:25px;top:8px;font-size:13px;color:#ccc">zypro</div>
  <div class="t" style="left:177px;top:9px;font-size:11px;color:#888">Aa</div>
  <div class="a" style="left:199px;top:8px;width:15px;height:14px;border-top:1px solid #888;border-bottom:1px solid #888"></div>
  <div class="t" style="left:200px;top:9px;font-size:10px;color:#888;text-decoration:underline">Ab</div>
  <div class="t" style="left:223px;top:7px;font-size:12px;color:#aaa;font-weight:bold">.*</div>
  <div class="t" style="left:246px;top:9px;font-size:12px;color:#ddd">第 1 个(共 4 个)</div>
  <svg class="a" style="left:338px;top:9px" width="14" height="14"><path d="M12.5 7 H2 M6.5 2.5 L2 7 L6.5 11.5" fill="none" stroke="#ccc" stroke-width="1.6"/></svg>
  <svg class="a" style="left:359px;top:9px" width="14" height="14"><path d="M1.5 7 H12 M7.5 2.5 L12 7 L7.5 11.5" fill="none" stroke="#ccc" stroke-width="1.6"/></svg>
  <svg class="a" style="left:381px;top:9px" width="14" height="14"><path d="M1 2 H13 M1 5.5 H9 M1 9 H13 M1 12.5 H9" stroke="#555" stroke-width="1.2"/></svg>
  <svg class="a" style="left:406px;top:10px" width="12" height="12"><path d="M1.5 1.5 L10.5 10.5 M10.5 1.5 L1.5 10.5" stroke="#eee" stroke-width="2"/></svg>
</div>
<div class="a" style="left:753px;top:0;width:1px;height:536px;background:#333"></div>
<div class="a" style="left:754px;top:10px;width:14px;height:2px;background:#666"></div>
<div class="a" style="left:755px;top:92px;width:6px;height:6px;background:#c99a3e"></div>
<div class="a" style="left:755px;top:104px;width:6px;height:6px;background:#c99a3e"></div>
<div class="a" style="left:755px;top:116px;width:6px;height:6px;background:#c99a3e"></div>
<div class="a" style="left:755px;top:153px;width:6px;height:6px;background:#c99a3e"></div>
</div>
<div id="edst" class="a">
  <div class="t" style="left:10px;top:4px;font-size:12px">/pages/index/index.wxss</div>
  <div class="t" style="left:163px;top:4px;font-size:12px">6.2 KB</div>
  <div class="t" style="left:644px;top:4px;font-size:12px">行 7, 列 17</div>
  <div class="t" style="left:722px;top:4px;font-size:12px">WXSS</div>
</div>

<!-- DEVTOOLS -->
<div id="dt" class="a">
  <!-- tab bar -->
  <div class="a" style="left:0;top:0;width:993px;height:27px;background:#f3f3f3;border-bottom:1px solid #cdcdcd;border-top:1px solid #d6d6d6"></div>
  <svg class="a" style="left:10px;top:6px" width="16" height="16"><path d="M8 13.5 H1.5 V1.5 H13.5 V7" fill="none" stroke="#555" stroke-width="1.3"/><path d="M6 6 L14 9.5 L10.5 10.5 L13.5 14 L12.5 15 L9.5 11.5 L7.5 14 Z" fill="#333"/></svg>
  <div class="a" style="left:37px;top:6px;width:1px;height:15px;background:#ccc"></div>
  <div class="t" style="left:50px;top:7px;font-size:12px;color:#5a5a5a">Console</div><div class="t" style="left:112px;top:7px;font-size:12px;color:#5a5a5a">Sources</div><div class="t" style="left:173px;top:7px;font-size:12px;color:#5a5a5a">Network</div><div class="t" style="left:239px;top:7px;font-size:12px;color:#5a5a5a">Application</div><div class="t" style="left:317px;top:7px;font-size:12px;color:#5a5a5a">Security</div><div class="t" style="left:380px;top:7px;font-size:12px;color:#5a5a5a">Audits</div><div class="t" style="left:433px;top:7px;font-size:12px;color:#5a5a5a">Storage</div><div class="t" style="left:494px;top:7px;font-size:12px;color:#5a5a5a">AppData</div><div class="t" style="left:560px;top:7px;font-size:12px;color:#333">Wxml</div><div class="t" style="left:610px;top:7px;font-size:12px;color:#5a5a5a">Sensor</div><div class="t" style="left:665px;top:7px;font-size:12px;color:#5a5a5a">Trace</div>
  <div class="a" style="left:552px;top:24px;width:48px;height:2px;background:#4a8af4"></div>
  <svg class="a" style="left:926px;top:7px" width="12" height="11"><path d="M6 0.5 L11.5 10.5 H0.5 Z" fill="#f4b400"/><path d="M6 4 V7" stroke="#fff" stroke-width="1.2"/><circle cx="6" cy="8.7" r=".7" fill="#fff"/></svg>
  <div class="t" style="left:940px;top:7px;font-size:12px;color:#5a5a5a">14</div>
  <div class="a" style="left:958px;top:6px;width:1px;height:15px;background:#ccc"></div>
  <div class="a" style="left:976px;top:7px;width:3px;height:3px;border-radius:50%;background:#555;box-shadow:0 5px #555,0 10px #555"></div>
  <!-- elements -->
  <svg class="a" style="left:11px;top:41px" width="9" height="8"><path d="M0.5 0.5 H8.5 L4.5 7.5 Z" fill="#555"/></svg>
<div class="t mono" style="left:23px;top:37px;height:15px;line-height:15px;font-size:11px;letter-spacing:-0.17px"><span style="color:#a894a8">&lt;</span><span style="color:#881280">page</span><span style="color:#a894a8">&gt;</span></div>
<svg class="a" style="left:23px;top:56px" width="9" height="8"><path d="M0.5 0.5 H8.5 L4.5 7.5 Z" fill="#555"/></svg>
<div class="t mono" style="left:35px;top:52px;height:15px;line-height:15px;font-size:11px;letter-spacing:-0.17px"><span style="color:#a894a8">&lt;</span><span style="color:#881280">scroll-view</span>&nbsp;&nbsp;<span style="color:#994500">scroll-top</span><span style="color:#994500">=</span><span style="color:#1a1aa6">"0"</span>&nbsp;&nbsp;<span style="color:#994500">scroll-y</span><span style="color:#994500">=</span><span style="color:#1a1aa6">""</span>&nbsp;&nbsp;<span style="color:#994500">style</span><span style="color:#994500">=</span><span style="color:#1a1aa6">"height: 100%;"</span><span style="color:#a894a8">&gt;</span></div>
<svg class="a" style="left:35px;top:71px" width="9" height="8"><path d="M0.5 0.5 H8.5 L4.5 7.5 Z" fill="#555"/></svg>
<div class="t mono" style="left:47px;top:67px;height:15px;line-height:15px;font-size:11px;letter-spacing:-0.17px"><span style="color:#a894a8">&lt;</span><span style="color:#881280">view</span>&nbsp;&nbsp;<span style="color:#994500">class</span><span style="color:#994500">=</span><span style="color:#1a1aa6">"container"</span><span style="color:#a894a8">&gt;</span></div>
<div class="a" style="left:0;top:82px;width:743px;height:15px;background:#3879d9"></div>
<svg class="a" style="left:48px;top:85px" width="8" height="9"><path d="M0.5 0.5 V8.5 L7.5 4.5 Z" fill="#fff"/></svg>
<div class="t mono" style="left:59px;top:82px;height:15px;line-height:15px;font-size:11px;letter-spacing:-0.17px"><span style="color:#c8d8f0">&lt;</span><span style="color:#fff">view</span>&nbsp;&nbsp;<span style="color:#d8e4f8">id</span><span style="color:#fff">=</span><span style="color:#fff">"banner"</span><span style="color:#c8d8f0">&gt;</span><span style="color:#9fb8e8">...&lt;/</span><span style="color:#fff">view</span><span style="color:#c8d8f0">&gt;</span></div>
<svg class="a" style="left:48px;top:100px" width="8" height="9"><path d="M0.5 0.5 V8.5 L7.5 4.5 Z" fill="#555"/></svg>
<div class="t mono" style="left:59px;top:97px;height:15px;line-height:15px;font-size:11px;letter-spacing:-0.17px"><span style="color:#a894a8">&lt;</span><span style="color:#881280">view</span>&nbsp;&nbsp;<span style="color:#994500">id</span><span style="color:#994500">=</span><span style="color:#1a1aa6">"classfi"</span><span style="color:#a894a8">&gt;</span><span style="color:#a894a8">...&lt;/</span><span style="color:#881280">view</span><span style="color:#a894a8">&gt;</span></div>
<svg class="a" style="left:48px;top:115px" width="8" height="9"><path d="M0.5 0.5 V8.5 L7.5 4.5 Z" fill="#555"/></svg>
<div class="t mono" style="left:59px;top:112px;height:15px;line-height:15px;font-size:11px;letter-spacing:-0.17px"><span style="color:#a894a8">&lt;</span><span style="color:#881280">view</span>&nbsp;&nbsp;<span style="color:#994500">id</span><span style="color:#994500">=</span><span style="color:#1a1aa6">"zypro"</span><span style="color:#a894a8">&gt;</span><span style="color:#a894a8">...&lt;/</span><span style="color:#881280">view</span><span style="color:#a894a8">&gt;</span></div>
<svg class="a" style="left:48px;top:130px" width="8" height="9"><path d="M0.5 0.5 V8.5 L7.5 4.5 Z" fill="#555"/></svg>
<div class="t mono" style="left:59px;top:127px;height:15px;line-height:15px;font-size:11px;letter-spacing:-0.17px"><span style="color:#a894a8">&lt;</span><span style="color:#881280">view</span>&nbsp;&nbsp;<span style="color:#994500">id</span><span style="color:#994500">=</span><span style="color:#1a1aa6">"hzatr-pro"</span><span style="color:#a894a8">&gt;</span><span style="color:#a894a8">...&lt;/</span><span style="color:#881280">view</span><span style="color:#a894a8">&gt;</span></div>
<svg class="a" style="left:47px;top:146px" width="9" height="8"><path d="M0.5 0.5 H8.5 L4.5 7.5 Z" fill="#555"/></svg>
<div class="t mono" style="left:59px;top:142px;height:15px;line-height:15px;font-size:11px;letter-spacing:-0.17px"><span style="color:#a894a8">&lt;</span><span style="color:#881280">view</span>&nbsp;&nbsp;<span style="color:#994500">id</span><span style="color:#994500">=</span><span style="color:#1a1aa6">"artist"</span><span style="color:#a894a8">&gt;</span></div>
<svg class="a" style="left:59px;top:161px" width="9" height="8"><path d="M0.5 0.5 H8.5 L4.5 7.5 Z" fill="#555"/></svg>
<div class="t mono" style="left:71px;top:157px;height:15px;line-height:15px;font-size:11px;letter-spacing:-0.17px"><span style="color:#a894a8">&lt;</span><span style="color:#881280">view</span>&nbsp;&nbsp;<span style="color:#994500">class</span><span style="color:#994500">=</span><span style="color:#1a1aa6">"artist-info"</span><span style="color:#a894a8">&gt;</span></div>
<svg class="a" style="left:72px;top:175px" width="8" height="9"><path d="M0.5 0.5 V8.5 L7.5 4.5 Z" fill="#555"/></svg>
<div class="t mono" style="left:83px;top:172px;height:15px;line-height:15px;font-size:11px;letter-spacing:-0.17px"><span style="color:#a894a8">&lt;</span><span style="color:#881280">view</span>&nbsp;&nbsp;<span style="color:#994500">class</span><span style="color:#994500">=</span><span style="color:#1a1aa6">"info-pimg"</span><span style="color:#a894a8">&gt;</span><span style="color:#a894a8">...&lt;/</span><span style="color:#881280">view</span><span style="color:#a894a8">&gt;</span></div>
<svg class="a" style="left:72px;top:190px" width="8" height="9"><path d="M0.5 0.5 V8.5 L7.5 4.5 Z" fill="#555"/></svg>
<div class="t mono" style="left:83px;top:187px;height:15px;line-height:15px;font-size:11px;letter-spacing:-0.17px"><span style="color:#a894a8">&lt;</span><span style="color:#881280">view</span>&nbsp;&nbsp;<span style="color:#994500">class</span><span style="color:#994500">=</span><span style="color:#1a1aa6">"info-interduce"</span><span style="color:#a894a8">&gt;</span><span style="color:#a894a8">...&lt;/</span><span style="color:#881280">view</span><span style="color:#a894a8">&gt;</span></div>
<div class="t mono" style="left:71px;top:202px;height:15px;line-height:15px;font-size:11px;letter-spacing:-0.17px"><span style="color:#a894a8">&lt;/</span><span style="color:#881280">view</span><span style="color:#a894a8">&gt;</span></div>
<svg class="a" style="left:60px;top:220px" width="8" height="9"><path d="M0.5 0.5 V8.5 L7.5 4.5 Z" fill="#555"/></svg>
<div class="t mono" style="left:71px;top:217px;height:15px;line-height:15px;font-size:11px;letter-spacing:-0.17px"><span style="color:#a894a8">&lt;</span><span style="color:#881280">view</span>&nbsp;&nbsp;<span style="color:#994500">class</span><span style="color:#994500">=</span><span style="color:#1a1aa6">"artist-pro"</span><span style="color:#a894a8">&gt;</span><span style="color:#a894a8">...&lt;/</span><span style="color:#881280">view</span><span style="color:#a894a8">&gt;</span></div>
<div class="t mono" style="left:59px;top:232px;height:15px;line-height:15px;font-size:11px;letter-spacing:-0.17px"><span style="color:#a894a8">&lt;/</span><span style="color:#881280">view</span><span style="color:#a894a8">&gt;</span></div>
  <div class="a" style="left:744px;top:28px;width:13px;height:213px;background:#f5f5f5"></div>
  <svg class="a" style="left:746px;top:31px" width="9" height="6"><path d="M0.5 5.5 L4.5 0.5 L8.5 5.5 Z" fill="#a3a3a3"/></svg>
  <div class="a" style="left:745px;top:42px;width:12px;height:140px;background:#c1c1c1"></div>
  <svg class="a" style="left:746px;top:230px" width="9" height="6"><path d="M0.5 0.5 L4.5 5.5 L8.5 0.5 Z" fill="#505050"/></svg>
  <div class="a" style="left:771px;top:28px;width:1px;height:214px;background:#cdcdcd"></div>
  <!-- styles -->
  <div class="a" style="left:772px;top:28px;width:221px;height:34px;background:#f3f3f3;border-bottom:1px solid #dadada"></div>
  <div class="a" style="left:783px;top:38px;width:44px;height:25px;background:#fff;border:1px solid #d3d3d3;border-bottom:none"></div>
  <div class="t" style="left:787px;top:43px;font-size:12px;color:#333">Styles</div>
  <div class="t" style="left:829px;top:42px;font-size:12px;color:#333">Dataset</div>
  <div class="t mono" style="left:776px;top:65px;font-size:11px;color:#333;line-height:15px"><span style="color:#555">element.style {</span><br>}</div>
  <div class="a" style="left:772px;top:96px;width:205px;height:1px;background:#e6e6e6"></div>
  <div class="t mono" style="left:776px;top:98px;font-size:11px;color:#222;line-height:18px">#banner {&nbsp;&nbsp;<span style="color:#555;text-decoration:underline">./pages/index/inde…</span></div>
  <div class="t mono" style="left:796px;top:113px;font-size:11px;color:#222;line-height:18px"><span style="color:#c80000">width</span>:100%;<br><span style="color:#c80000">height</span>:368rpx;<br><span style="color:#c80000">position</span>:relative;<br><span style="color:#c80000">display</span>:flex;<br><span style="color:#c80000">align-items</span>:flex-start;<br><span style="color:#c80000">justify-content</span>:flex-start;</div>
  <div class="t mono" style="left:776px;top:222px;font-size:11px;color:#222">}</div>
  <div class="a" style="left:793px;top:131px;width:102px;height:21px;border:2px solid #c8161d"></div>
  <div class="a" style="left:977px;top:62px;width:14px;height:180px;background:#f5f5f5"></div>
  <svg class="a" style="left:979px;top:63px" width="9" height="6"><path d="M0.5 5.5 L4.5 0.5 L8.5 5.5 Z" fill="#a3a3a3"/></svg>
  <div class="a" style="left:978px;top:79px;width:12px;height:93px;background:#c1c1c1"></div>
  <svg class="a" style="left:979px;top:231px" width="9" height="6"><path d="M0.5 0.5 L4.5 5.5 L8.5 0.5 Z" fill="#505050"/></svg>
  <!-- breadcrumbs -->
  <div class="a" style="left:0;top:241px;width:993px;height:1px;background:#cdcdcd"></div>
  <div class="t" style="left:17px;top:247px;font-size:12px;color:#222">page</div>
  <div class="t" style="left:54px;top:247px;font-size:12px;color:#222">scroll-view</div>
  <div class="t" style="left:120px;top:247px;font-size:12px;color:#222">view.container</div>
  <div class="a" style="left:201px;top:242px;width:79px;height:24px;background:#1a73c8"></div>
  <div class="t" style="left:207px;top:247px;font-size:12px;color:#fff">view#banner</div>
  <!-- h scroll -->
  <div class="a" style="left:0;top:266px;width:993px;height:16px;background:#f1f1f1"></div>
  <svg class="a" style="left:8px;top:270px" width="6" height="9"><path d="M5.5 0.5 L0.5 4.5 L5.5 8.5 Z" fill="#a3a3a3"/></svg>
  <div class="a" style="left:17px;top:267px;width:940px;height:14px;background:#c1c1c1"></div>
  <svg class="a" style="left:982px;top:270px" width="6" height="9"><path d="M0.5 0.5 L5.5 4.5 L0.5 8.5 Z" fill="#222"/></svg>
  <div class="a" style="left:0;top:283px;width:993px;height:1px;background:#bfbfbf"></div>
  <!-- drawer -->
  <div class="a" style="left:0;top:284px;width:993px;height:27px;background:#f3f3f3"></div>
  <div class="a" style="left:15px;top:293px;width:3px;height:3px;border-radius:50%;background:#555;box-shadow:0 5px #555,0 10px #555"></div>
  <div class="t" style="left:38px;top:292px;font-size:12px;color:#5a5a5a">Console</div>
  <div class="a" style="left:87px;top:286px;width:87px;height:25px;background:#fff;border:1px solid #d6d6d6;border-bottom:none"></div>
  <div class="t" style="left:91px;top:292px;font-size:12px;color:#333">What's New</div>
  <svg class="a" style="left:159px;top:294px" width="10" height="10"><path d="M1.5 1.5 L8.5 8.5 M8.5 1.5 L1.5 8.5" stroke="#444" stroke-width="1.4"/></svg>
  <svg class="a" style="left:971px;top:292px" width="12" height="12"><path d="M1.5 1.5 L10.5 10.5 M10.5 1.5 L1.5 10.5" stroke="#555" stroke-width="1.6"/></svg>
  <div class="a" style="left:0;top:311px;width:976px;height:15px;background:#3367d6;overflow:hidden">
    <div class="t" style="left:16px;top:10px;font-size:16px;color:#fff;font-weight:normal">Highlights from the Chrome 60 update</div>
  </div>
  <svg class="a" style="left:979px;top:313px" width="9" height="13"><path d="M1 5 L4.5 1 L8 5 Z M1 8 L4.5 12 L8 8 Z" fill="#777"/></svg>
</div>
<div class="a" style="left:475px;top:651px;width:1px;height:326px;background:#d0d0d0"></div>

</body></html>
